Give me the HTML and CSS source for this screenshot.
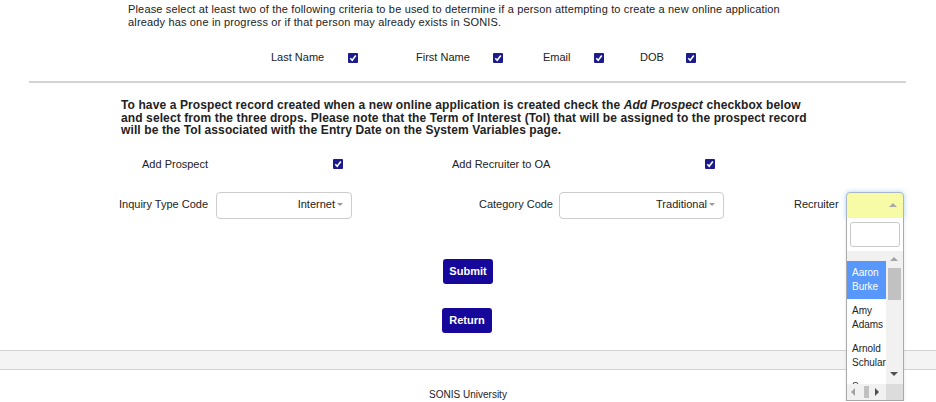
FILE: index.html
```html
<!DOCTYPE html>
<html>
<head>
<meta charset="utf-8">
<link rel="stylesheet" href="styles.css">
</head>
<body>
<div class="page">
  <p class="intro">Please select at least two of the following criteria to be used to determine if a person attempting to create a new online application already has one in progress or if that person may already exists in SONIS.</p>

  <div class="criteria">
    <span class="lbl c1">Last Name</span><span class="cb c2"><svg viewBox="0 0 10 10"><path d="M2.3 5.2 L4.2 7.2 L7.8 2.6" /></svg></span>
    <span class="lbl c3">First Name</span><span class="cb c4"><svg viewBox="0 0 10 10"><path d="M2.3 5.2 L4.2 7.2 L7.8 2.6" /></svg></span>
    <span class="lbl c5">Email</span><span class="cb c6"><svg viewBox="0 0 10 10"><path d="M2.3 5.2 L4.2 7.2 L7.8 2.6" /></svg></span>
    <span class="lbl c7">DOB</span><span class="cb"><svg viewBox="0 0 10 10"><path d="M2.3 5.2 L4.2 7.2 L7.8 2.6" /></svg></span>
  </div>

  <div class="rule"></div>

  <p class="note">To have a Prospect record created when a new online application is created check the <i>Add Prospect</i> checkbox below and select from the three drops. Please note that the Term of Interest (ToI) that will be assigned to the prospect record will be the ToI associated with the Entry Date on the System Variables page.</p>

  <div class="row-add">
    <span class="lbl a1">Add Prospect</span><span class="cb a2"><svg viewBox="0 0 10 10"><path d="M2.3 5.2 L4.2 7.2 L7.8 2.6" /></svg></span>
    <span class="lbl a3">Add Recruiter to OA</span><span class="cb"><svg viewBox="0 0 10 10"><path d="M2.3 5.2 L4.2 7.2 L7.8 2.6" /></svg></span>
  </div>

  <div class="row-sel">
    <span class="lbl s-lbl1">Inquiry Type Code</span>
    <div class="select sel1"><span class="val">Internet</span><span class="arrow"></span></div>
    <span class="lbl s-lbl2">Category Code</span>
    <div class="select sel2"><span class="val">Traditional</span><span class="arrow"></span></div>
    <span class="lbl s-lbl3">Recruiter</span>
    <div class="rec-wrap">
      <div class="select sel3"><span class="arrow up"></span></div>
      <div class="dropdown">
        <div class="search"></div>
        <div class="list-area">
          <div class="list">
            <div class="prev"></div>
            <div class="opt active">Aaron<br>Burke</div>
            <div class="opt">Amy<br>Adams</div>
            <div class="opt">Arnold<br>Schular</div>
            <div class="opt">Sam<br>Lee</div>
          </div>
          <div class="vscroll">
            <span class="tri t-up"></span>
            <span class="thumb"></span>
            <span class="tri t-down"></span>
          </div>
        </div>
        <div class="hscroll">
          <div class="htrack">
            <span class="tri t-left"></span>
            <span class="hthumb"></span>
            <span class="tri t-right"></span>
          </div>
          <div class="corner"></div>
        </div>
      </div>
    </div>
  </div>

  <div class="btn-row first"><button class="btn">Submit</button></div>
  <div class="btn-row second"><button class="btn">Return</button></div>

  <div class="band"></div>
  <div class="footer">SONIS University</div>
</div>
</body>
</html>
```

FILE: styles.css
```css
html, body {
  margin: 0;
  padding: 0;
  background: #ffffff;
}
body {
  font-family: "Liberation Sans", Arial, sans-serif;
  font-size: 11px;
  color: #222222;
  overflow: hidden;
}
.page {
  width: 936px;
  padding-top: 3px;
}
.intro {
  margin: 0 0 0 128px;
  width: 662px;
  line-height: 13px;
  letter-spacing: 0.16px;
}
.lbl {
  line-height: 13px;
  white-space: nowrap;
}
.cb {
  display: inline-flex;
  width: 10px;
  height: 10px;
  background: #1b1b8f;
  border-radius: 1px;
  box-sizing: border-box;
}
.cb svg {
  width: 10px;
  height: 10px;
}
.cb path {
  fill: none;
  stroke: #ffffff;
  stroke-width: 1.6;
}
.criteria {
  display: flex;
  align-items: center;
  margin-top: 22px;
  padding-left: 271px;
  height: 13px;
}
.criteria .c1 { width: 77px; }
.criteria .c2 { margin-right: 58px; }
.criteria .c3 { width: 77px; }
.criteria .c4 { margin-right: 40px; }
.criteria .c5 { width: 51px; }
.criteria .c6 { margin-right: 36px; }
.criteria .c7 { width: 46px; }

.rule {
  margin: 17px 0 0 29px;
  width: 877px;
  height: 2px;
  background: #d3d3d3;
}
.note {
  margin: 16px 0 0 121px;
  width: 694px;
  font-size: 12px;
  letter-spacing: 0.11px;
  font-weight: bold;
  line-height: 12.5px;
}
.row-add {
  display: flex;
  align-items: center;
  margin-top: 21px;
  padding-left: 142px;
  height: 13px;
}
.row-add .a1 { width: 191px; }
.row-add .a2 { margin-right: 109px; }
.row-add .a3 { width: 253px; }

.row-sel {
  display: flex;
  align-items: center;
  margin-top: 21px;
  padding-left: 119px;
  height: 27px;
}
.s-lbl1 { width: 97px; }
.s-lbl2 { width: 80px; margin-left: 127px; }
.s-lbl3 { width: 52px; margin-left: 70px; }
.row-sel .lbl { padding-bottom: 1px; }
.select {
  box-sizing: border-box;
  height: 27px;
  border: 1px solid #cccccc;
  border-radius: 4px;
  background: #ffffff;
  display: flex;
  align-items: center;
  justify-content: flex-end;
  padding-right: 8px;
  padding-bottom: 3px;
}
.sel1 { width: 136px; }
.sel2 { width: 165px; }
.val { color: #222222; }
.arrow {
  width: 0;
  height: 0;
  border-left: 3px solid transparent;
  border-right: 3px solid transparent;
  border-top: 3px solid #999999;
  margin-left: 2px;
  margin-top: 2px;
}
.arrow.up {
  border-top: none;
  border-bottom: 4px solid #aaaaaa;
  border-left-width: 4px;
  border-right-width: 4px;
  margin: 0;
}
.rec-wrap {
  position: relative;
  width: 58px;
  height: 27px;
}
.sel3 {
  width: 58px;
  background: #f7fba6;
  border-color: #a8b8c8;
  border-radius: 4px 4px 0 0;
  box-shadow: 0 0 5px rgba(102, 170, 238, 0.55);
  padding-right: 6px;
  padding-bottom: 0;
}
.dropdown {
  position: absolute;
  top: 26px;
  left: 0;
  width: 58px;
  height: 183px;
  box-sizing: border-box;
  border: 1px solid #aaaaaa;
  border-top: none;
  background: #ffffff;
  display: flex;
  flex-direction: column;
  box-shadow: 0 2px 3px rgba(0,0,0,0.1);
}
.search {
  margin: 4px 3px 4px 3px;
  height: 25px;
  box-sizing: border-box;
  border: 1px solid #c8c8c8;
  border-radius: 3px;
  flex: none;
}
.list-area {
  display: flex;
  height: 133px;
  flex: none;
  overflow: hidden;
}
.list {
  width: 39px;
  overflow: hidden;
  font-size: 10px;
  line-height: 14px;
}
.prev {
  height: 10px;
  background: #f1f1f1;
}
.opt {
  padding: 5px 0 5px 5px;
  white-space: nowrap;
  color: #222222;
}
.opt.active {
  background: #5897fb;
  color: #ffffff;
}
.vscroll {
  width: 17px;
  background: #f1f1f1;
  position: relative;
}
.tri {
  position: absolute;
  width: 0;
  height: 0;
}
.t-up {
  left: 4px;
  top: 6px;
  border-left: 4px solid transparent;
  border-right: 4px solid transparent;
  border-bottom: 4px solid #a3a3a3;
}
.t-down {
  left: 4px;
  top: 121px;
  border-left: 4px solid transparent;
  border-right: 4px solid transparent;
  border-top: 4px solid #505050;
}
.thumb {
  position: absolute;
  left: 2px;
  top: 17px;
  width: 13px;
  height: 32px;
  background: #c1c1c1;
}
.hscroll {
  display: flex;
  height: 16px;
  flex: none;
}
.htrack {
  width: 39px;
  background: #f1f1f1;
  position: relative;
}
.t-left {
  left: 4px;
  top: 4px;
  border-top: 4px solid transparent;
  border-bottom: 4px solid transparent;
  border-right: 4px solid #a3a3a3;
}
.t-right {
  left: 28px;
  top: 4px;
  border-top: 4px solid transparent;
  border-bottom: 4px solid transparent;
  border-left: 4px solid #505050;
}
.hthumb {
  position: absolute;
  left: 17px;
  top: 2px;
  width: 5px;
  height: 12px;
  background: #c1c1c1;
}
.corner {
  width: 17px;
  background: #dcdcdc;
}
.btn-row {
  display: flex;
  justify-content: center;
}
.btn-row.first { margin-top: 40px; padding-left: 0; }
.btn-row.second { margin-top: 24px; padding-right: 2px; }
.btn {
  font-family: "Liberation Sans", Arial, sans-serif;
  font-size: 11px;
  font-weight: bold;
  color: #ffffff;
  background: #16089a;
  border: none;
  border-radius: 3px;
  width: 50px;
  height: 25px;
  padding: 0;
}
.band {
  margin-top: 17px;
  height: 18px;
  background: #f4f4f4;
  border-top: 1px solid #d3d3d3;
  border-bottom: 1px solid #d3d3d3;
}
.footer {
  text-align: center;
  font-size: 10px;
  margin-top: 19px;
  line-height: 12px;
  color: #222222;
}
```
